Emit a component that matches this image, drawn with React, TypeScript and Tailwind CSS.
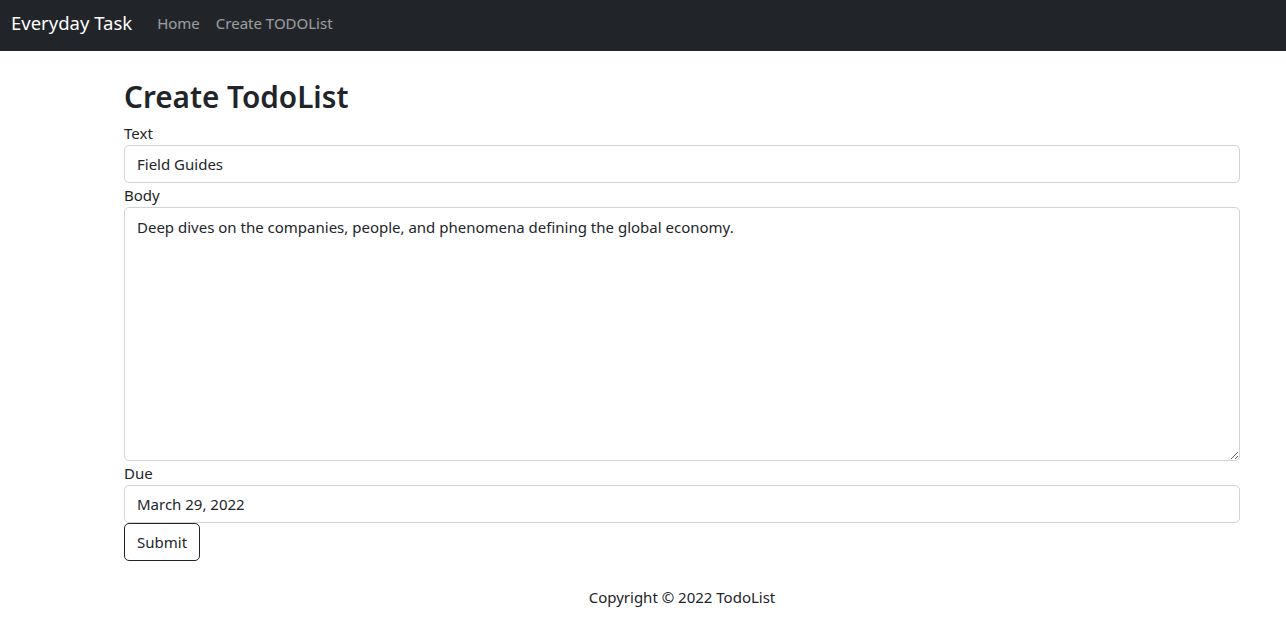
export default function App() {
  const font = { fontFamily: '"Noto Sans", "Open Sans", sans-serif' };
  return (
    <div className="min-h-screen bg-white text-[#212529]" style={font}>
      <nav className="h-[51px] bg-[#212529] flex items-center px-[11px] pb-[5px]">
        <span className="text-[18.5px] text-white mr-[25px] leading-[30px]">Everyday Task</span>
        <a className="text-[15px] text-white/55 leading-6">Home</a>
        <a className="text-[15px] text-white/55 ml-4 leading-6">Create TODOList</a>
      </nav>
      <main className="ml-[124px] w-[1116px] text-[15px]">
        <h1 className="text-[29.7px] font-semibold leading-[48px] mt-[22px]">Create TodoList</h1>
        <form>
          <label className="block leading-6">Text</label>
          <input
            defaultValue="Field Guides"
            className="block w-full h-[38px] px-3 border border-[#ced4da] rounded-[5px] outline-none"
          />
          <label className="block leading-6">Body</label>
          <textarea
            defaultValue="Deep dives on the companies, people, and phenomena defining the global economy."
            className="block w-full h-[254px] px-3 py-[7px] border border-[#ced4da] rounded-[5px] leading-6 outline-none resize-y"
          />
          <label className="block leading-6">Due</label>
          <input
            defaultValue="March 29, 2022"
            className="block w-full h-[38px] px-3 border border-[#ced4da] rounded-[5px] outline-none"
          />
          <button type="button" className="h-[38px] px-3 border border-[#212529] rounded-[5px] bg-white">
            Submit
          </button>
        </form>
        <footer className="text-center leading-6 mt-6">Copyright © 2022 TodoList</footer>
      </main>
    </div>
  );
}
